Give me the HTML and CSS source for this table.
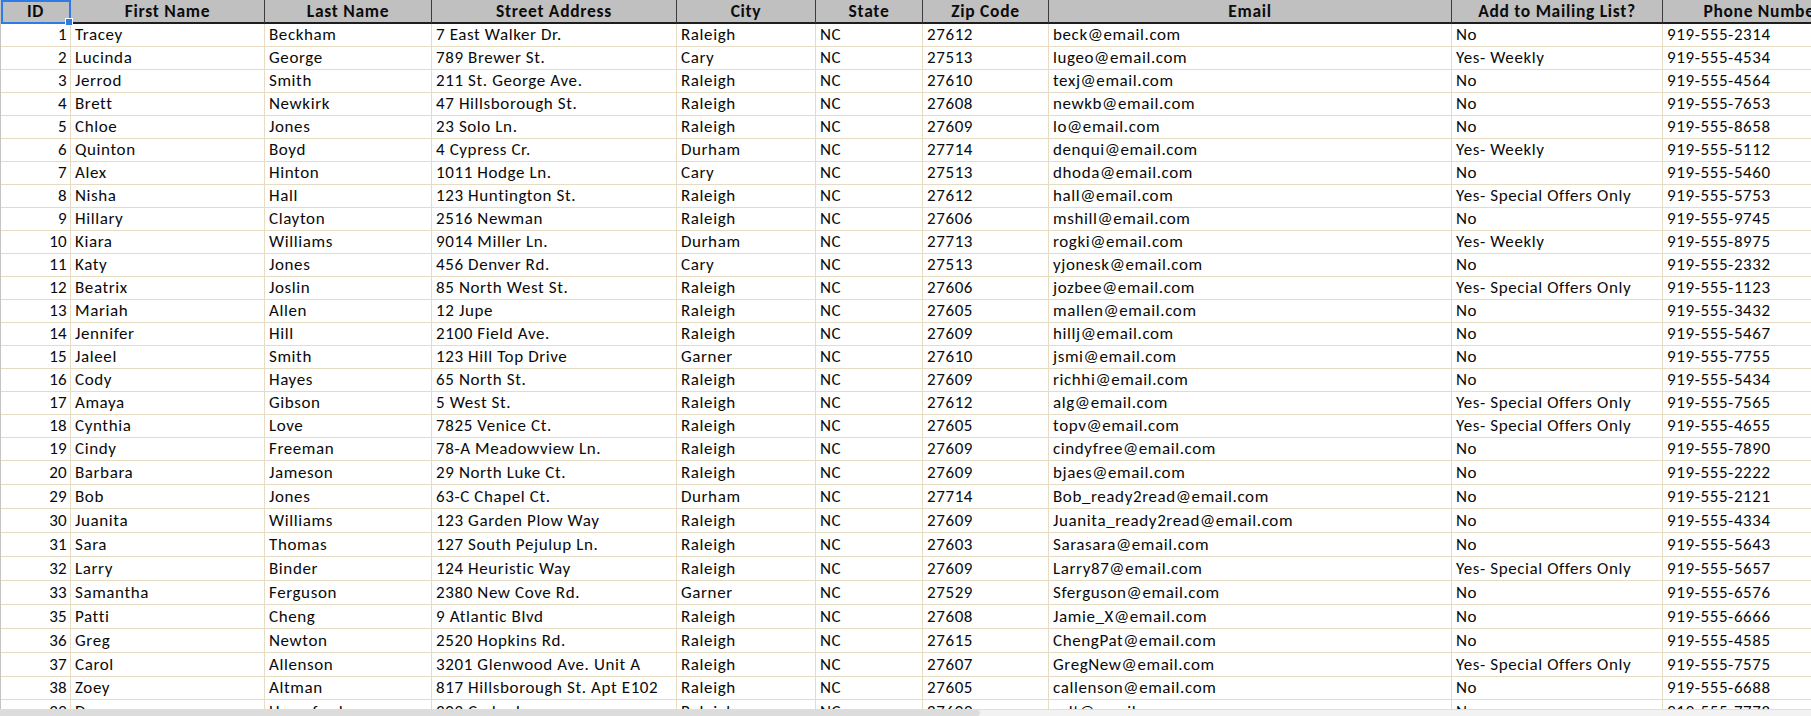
FILE: index.html
```html
<!DOCTYPE html>
<html>
<head>
<meta charset="utf-8">
<link rel="stylesheet" href="styles.css">
</head>
<body>
<div class="sheet">
  <div class="row head">
    <div class="c h sel">ID<span class="handle"></span></div>
    <div class="c h">First Name</div>
    <div class="c h">Last Name</div>
    <div class="c h">Street Address</div>
    <div class="c h">City</div>
    <div class="c h">State</div>
    <div class="c h">Zip Code</div>
    <div class="c h">Email</div>
    <div class="c h">Add to Mailing List?</div>
    <div class="c h">Phone Number</div>
  </div>
  <div class="row r23"><div class="c n">1</div><div class="c">Tracey</div><div class="c">Beckham</div><div class="c">7 East Walker Dr.</div><div class="c">Raleigh</div><div class="c">NC</div><div class="c">27612</div><div class="c">beck@email.com</div><div class="c">No</div><div class="c">919-555-2314</div></div>
  <div class="row r23"><div class="c n">2</div><div class="c">Lucinda</div><div class="c">George</div><div class="c">789 Brewer St.</div><div class="c">Cary</div><div class="c">NC</div><div class="c">27513</div><div class="c">lugeo@email.com</div><div class="c">Yes- Weekly</div><div class="c">919-555-4534</div></div>
  <div class="row r23"><div class="c n">3</div><div class="c">Jerrod</div><div class="c">Smith</div><div class="c">211 St. George Ave.</div><div class="c">Raleigh</div><div class="c">NC</div><div class="c">27610</div><div class="c">texj@email.com</div><div class="c">No</div><div class="c">919-555-4564</div></div>
  <div class="row r23"><div class="c n">4</div><div class="c">Brett</div><div class="c">Newkirk</div><div class="c">47 Hillsborough St.</div><div class="c">Raleigh</div><div class="c">NC</div><div class="c">27608</div><div class="c">newkb@email.com</div><div class="c">No</div><div class="c">919-555-7653</div></div>
  <div class="row r23"><div class="c n">5</div><div class="c">Chloe</div><div class="c">Jones</div><div class="c">23 Solo Ln.</div><div class="c">Raleigh</div><div class="c">NC</div><div class="c">27609</div><div class="c">lo@email.com</div><div class="c">No</div><div class="c">919-555-8658</div></div>
  <div class="row r23"><div class="c n">6</div><div class="c">Quinton</div><div class="c">Boyd</div><div class="c">4 Cypress Cr.</div><div class="c">Durham</div><div class="c">NC</div><div class="c">27714</div><div class="c">denqui@email.com</div><div class="c">Yes- Weekly</div><div class="c">919-555-5112</div></div>
  <div class="row r23"><div class="c n">7</div><div class="c">Alex</div><div class="c">Hinton</div><div class="c">1011 Hodge Ln.</div><div class="c">Cary</div><div class="c">NC</div><div class="c">27513</div><div class="c">dhoda@email.com</div><div class="c">No</div><div class="c">919-555-5460</div></div>
  <div class="row r23"><div class="c n">8</div><div class="c">Nisha</div><div class="c">Hall</div><div class="c">123 Huntington St.</div><div class="c">Raleigh</div><div class="c">NC</div><div class="c">27612</div><div class="c">hall@email.com</div><div class="c">Yes- Special Offers Only</div><div class="c">919-555-5753</div></div>
  <div class="row r23"><div class="c n">9</div><div class="c">Hillary</div><div class="c">Clayton</div><div class="c">2516 Newman</div><div class="c">Raleigh</div><div class="c">NC</div><div class="c">27606</div><div class="c">mshill@email.com</div><div class="c">No</div><div class="c">919-555-9745</div></div>
  <div class="row r23"><div class="c n">10</div><div class="c">Kiara</div><div class="c">Williams</div><div class="c">9014 Miller Ln.</div><div class="c">Durham</div><div class="c">NC</div><div class="c">27713</div><div class="c">rogki@email.com</div><div class="c">Yes- Weekly</div><div class="c">919-555-8975</div></div>
  <div class="row r23"><div class="c n">11</div><div class="c">Katy</div><div class="c">Jones</div><div class="c">456 Denver Rd.</div><div class="c">Cary</div><div class="c">NC</div><div class="c">27513</div><div class="c">yjonesk@email.com</div><div class="c">No</div><div class="c">919-555-2332</div></div>
  <div class="row r23"><div class="c n">12</div><div class="c">Beatrix</div><div class="c">Joslin</div><div class="c">85 North West St.</div><div class="c">Raleigh</div><div class="c">NC</div><div class="c">27606</div><div class="c">jozbee@email.com</div><div class="c">Yes- Special Offers Only</div><div class="c">919-555-1123</div></div>
  <div class="row r23"><div class="c n">13</div><div class="c">Mariah</div><div class="c">Allen</div><div class="c">12 Jupe</div><div class="c">Raleigh</div><div class="c">NC</div><div class="c">27605</div><div class="c">mallen@email.com</div><div class="c">No</div><div class="c">919-555-3432</div></div>
  <div class="row r23"><div class="c n">14</div><div class="c">Jennifer</div><div class="c">Hill</div><div class="c">2100 Field Ave.</div><div class="c">Raleigh</div><div class="c">NC</div><div class="c">27609</div><div class="c">hillj@email.com</div><div class="c">No</div><div class="c">919-555-5467</div></div>
  <div class="row r23"><div class="c n">15</div><div class="c">Jaleel</div><div class="c">Smith</div><div class="c">123 Hill Top Drive</div><div class="c">Garner</div><div class="c">NC</div><div class="c">27610</div><div class="c">jsmi@email.com</div><div class="c">No</div><div class="c">919-555-7755</div></div>
  <div class="row r23"><div class="c n">16</div><div class="c">Cody</div><div class="c">Hayes</div><div class="c">65 North St.</div><div class="c">Raleigh</div><div class="c">NC</div><div class="c">27609</div><div class="c">richhi@email.com</div><div class="c">No</div><div class="c">919-555-5434</div></div>
  <div class="row r23"><div class="c n">17</div><div class="c">Amaya</div><div class="c">Gibson</div><div class="c">5 West St.</div><div class="c">Raleigh</div><div class="c">NC</div><div class="c">27612</div><div class="c">alg@email.com</div><div class="c">Yes- Special Offers Only</div><div class="c">919-555-7565</div></div>
  <div class="row r23"><div class="c n">18</div><div class="c">Cynthia</div><div class="c">Love</div><div class="c">7825 Venice Ct.</div><div class="c">Raleigh</div><div class="c">NC</div><div class="c">27605</div><div class="c">topv@email.com</div><div class="c">Yes- Special Offers Only</div><div class="c">919-555-4655</div></div>
  <div class="row r23"><div class="c n">19</div><div class="c">Cindy</div><div class="c">Freeman</div><div class="c">78-A Meadowview Ln.</div><div class="c">Raleigh</div><div class="c">NC</div><div class="c">27609</div><div class="c">cindyfree@email.com</div><div class="c">No</div><div class="c">919-555-7890</div></div>
  <div class="row r24"><div class="c n">20</div><div class="c">Barbara</div><div class="c">Jameson</div><div class="c">29 North Luke Ct.</div><div class="c">Raleigh</div><div class="c">NC</div><div class="c">27609</div><div class="c">bjaes@email.com</div><div class="c">No</div><div class="c">919-555-2222</div></div>
  <div class="row r24"><div class="c n">29</div><div class="c">Bob</div><div class="c">Jones</div><div class="c">63-C Chapel Ct.</div><div class="c">Durham</div><div class="c">NC</div><div class="c">27714</div><div class="c">Bob_ready2read@email.com</div><div class="c">No</div><div class="c">919-555-2121</div></div>
  <div class="row r24"><div class="c n">30</div><div class="c">Juanita</div><div class="c">Williams</div><div class="c">123 Garden Plow Way</div><div class="c">Raleigh</div><div class="c">NC</div><div class="c">27609</div><div class="c">Juanita_ready2read@email.com</div><div class="c">No</div><div class="c">919-555-4334</div></div>
  <div class="row r24"><div class="c n">31</div><div class="c">Sara</div><div class="c">Thomas</div><div class="c">127 South Pejulup Ln.</div><div class="c">Raleigh</div><div class="c">NC</div><div class="c">27603</div><div class="c">Sarasara@email.com</div><div class="c">No</div><div class="c">919-555-5643</div></div>
  <div class="row r24"><div class="c n">32</div><div class="c">Larry</div><div class="c">Binder</div><div class="c">124 Heuristic Way</div><div class="c">Raleigh</div><div class="c">NC</div><div class="c">27609</div><div class="c">Larry87@email.com</div><div class="c">Yes- Special Offers Only</div><div class="c">919-555-5657</div></div>
  <div class="row r24"><div class="c n">33</div><div class="c">Samantha</div><div class="c">Ferguson</div><div class="c">2380 New Cove Rd.</div><div class="c">Garner</div><div class="c">NC</div><div class="c">27529</div><div class="c">Sferguson@email.com</div><div class="c">No</div><div class="c">919-555-6576</div></div>
  <div class="row r24"><div class="c n">35</div><div class="c">Patti</div><div class="c">Cheng</div><div class="c">9 Atlantic Blvd</div><div class="c">Raleigh</div><div class="c">NC</div><div class="c">27608</div><div class="c">Jamie_X@email.com</div><div class="c">No</div><div class="c">919-555-6666</div></div>
  <div class="row r24"><div class="c n">36</div><div class="c">Greg</div><div class="c">Newton</div><div class="c">2520 Hopkins Rd.</div><div class="c">Raleigh</div><div class="c">NC</div><div class="c">27615</div><div class="c">ChengPat@email.com</div><div class="c">No</div><div class="c">919-555-4585</div></div>
  <div class="row r24"><div class="c n">37</div><div class="c">Carol</div><div class="c">Allenson</div><div class="c">3201 Glenwood Ave. Unit A</div><div class="c">Raleigh</div><div class="c">NC</div><div class="c">27607</div><div class="c">GregNew@email.com</div><div class="c">Yes- Special Offers Only</div><div class="c">919-555-7575</div></div>
  <div class="row r23"><div class="c n">38</div><div class="c">Zoey</div><div class="c">Altman</div><div class="c">817 Hillsborough St. Apt E102</div><div class="c">Raleigh</div><div class="c">NC</div><div class="c">27605</div><div class="c">callenson@email.com</div><div class="c">No</div><div class="c">919-555-6688</div></div>
  <div class="row r24"><div class="c n">39</div><div class="c">Danny</div><div class="c">Haverford</div><div class="c">302 Cedar Ln.</div><div class="c">Raleigh</div><div class="c">NC</div><div class="c">27609</div><div class="c">zalt@email.com</div><div class="c">No</div><div class="c">919-555-7778</div></div>
</div>
<div class="hscroll"><div class="thumb"></div></div>
</body>
</html>
```

FILE: styles.css
```css
html, body {
  margin: 0;
  padding: 0;
  background: #ffffff;
  width: 1811px;
  height: 716px;
  overflow: hidden;
}

body {
  position: relative;
  font-family: Carlito, Calibri, Lato, "Liberation Sans", sans-serif;
  font-size: 17px;
  letter-spacing: 0.6px;
  color: #0a0a0a;
}

.sheet {
  display: flex;
  flex-direction: column;
  width: 1920px;
  border-left: 1px solid #c4c4c4;
}

.row {
  display: grid;
  grid-template-columns: 70px 194px 167px 245px 139px 107px 126px 403px 211px 200px;
}

.r23 { height: 23px; }
.r24 { height: 24px; }

.c {
  box-sizing: border-box;
  border-right: 1px solid #e6dcc4;
  border-bottom: 1px solid #e6dcc4;
  padding: 0 4px 0 4px;
  white-space: nowrap;
  overflow: hidden;
  line-height: 22px;
}

.r24 .c { line-height: 23px; }

.n {
  text-align: right;
  padding-right: 3px;
  letter-spacing: 0.3px;
}

.head {
  height: 24px;
  background: #c0c0c0;
}

.h {
  position: relative;
  overflow: visible;
  font-size: 17.5px;
  font-weight: bold;
  text-align: center;
  line-height: 22px;
  letter-spacing: 0.7px;
  border-right: 1px solid #3c3c3c;
  border-bottom: 2px solid #1e1e1e;
  color: #0c0c0c;
}

.sel {
  outline: 2px solid #2f7be6;
  outline-offset: -2px;
}

.handle {
  position: absolute;
  right: -3px;
  bottom: -4px;
  width: 6px;
  height: 6px;
  background: #2f7be6;
  border: 1px solid #ffffff;
  z-index: 2;
}

.hscroll {
  position: absolute;
  left: 0;
  right: 0;
  bottom: 0;
  height: 6px;
  background: #f2f2f2;
  border-top: 1px solid #dedede;
}

.thumb {
  width: 980px;
  height: 100%;
  background: #dcdcdc;
  border-radius: 0 4px 4px 0;
}
```
